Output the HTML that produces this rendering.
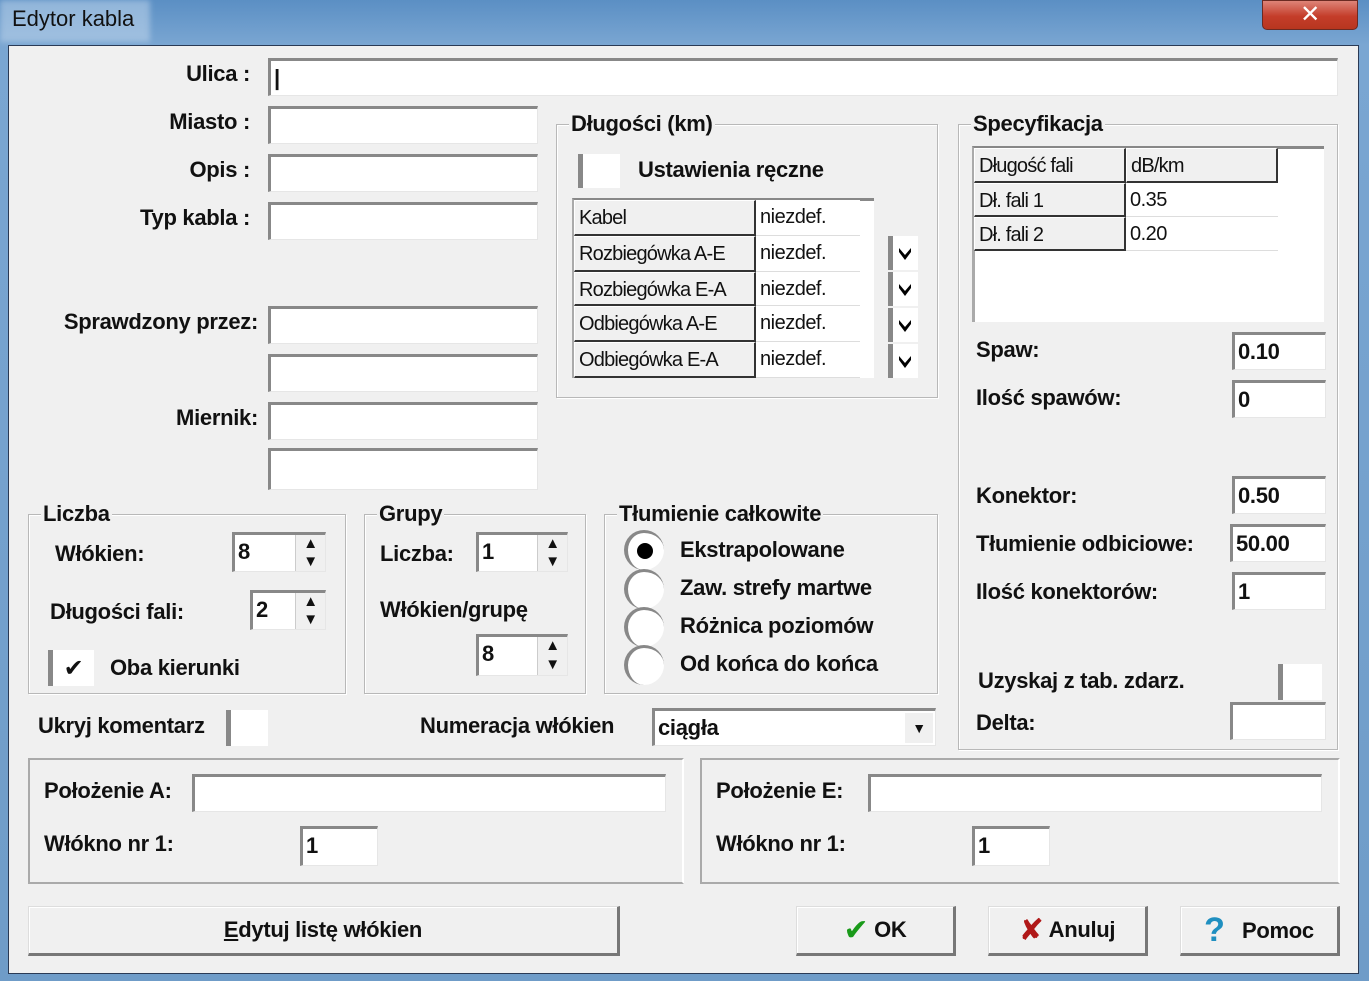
<!DOCTYPE html>
<html><head><meta charset="utf-8"><style>
*{box-sizing:border-box;margin:0;padding:0}
body{width:1369px;height:981px;overflow:hidden;background:linear-gradient(180deg,#5b8fc4 0,#7aa6d2 45px,#6f9cc8 100%);position:relative;font-family:"Liberation Sans Narrow","Liberation Sans",sans-serif;font-weight:bold;font-size:22px;color:#111;letter-spacing:-0.3px}
.a{position:absolute;white-space:nowrap}
.dlg{position:absolute;left:8px;top:45px;width:1351px;height:929px;background:#f0f0f0;border:1px solid #2a3a55}
.in{position:absolute;background:#fff;border-top:3px solid #888;border-left:3px solid #888;border-right:1px solid #e6e6e6;border-bottom:1px solid #e6e6e6;padding-left:3px;font-size:22px;line-height:34px}
.grp{position:absolute;border:1px solid #b8b8b8;box-shadow:inset 1px 1px 0 #fff,1px 1px 0 #fff}
.gt{position:absolute;top:-14px;left:12px;background:#f0f0f0;padding:0 2px;line-height:26px}
.lbl{position:absolute;white-space:nowrap;line-height:28px}
.r{text-align:right}
.btn{position:absolute;background:#f0f0f0;border:1px solid #ddd;border-right:3px solid #777;border-bottom:3px solid #777;box-shadow:inset 1px 1px 0 #fff;text-align:center;line-height:46px}
.cb{position:absolute;background:#fff;border-left:5px solid #888}
.cell{position:absolute;font-weight:normal;font-size:20px;letter-spacing:-0.8px;line-height:34px;padding-left:4px;background:#f0f0f0;border-right:2px solid #333;border-bottom:2px solid #333;border-top:1px solid #fff;border-left:1px solid #fff;overflow:hidden}
.cw{position:absolute;font-weight:normal;font-size:20px;letter-spacing:-0.5px;line-height:34px;padding-left:4px;background:#fff;border-bottom:1px solid #ddd}
.spin{position:absolute;width:30px;background:#f0f0f0;border-left:1px solid #ccc}
.spin div{height:50%;font-size:15px;text-align:center;line-height:18px}
.rad{position:absolute;width:40px;height:40px;border-radius:50%;background:#fff;border-left:4px solid #888;border-top:3px solid #888}
.arr{position:absolute;width:30px;height:34px;background:#fff;border-left:5px solid #888}
</style></head><body>
<div class="a" style="left:0;top:0;width:150px;height:42px;background:rgba(200,220,240,.5);filter:blur(3px)"></div>
<div class="a" style="left:12px;top:6px;font-family:'Liberation Sans',sans-serif;font-weight:normal;font-size:22px;letter-spacing:0">Edytor kabla</div>
<div class="a" style="left:1262px;top:0;width:96px;height:30px;border-radius:0 0 5px 5px;background:linear-gradient(#de8478,#c43d2a 55%,#b8361f);border:1px solid #6b2a22;color:#fff;text-align:center;font-size:24px;line-height:26px;font-family:'DejaVu Sans',sans-serif">✕</div>
<div class="dlg"></div>

<div class="lbl r" style="left:100px;top:60px;width:150px">Ulica :</div>
<div class="in" style="left:268px;top:58px;width:1070px;height:38px">|</div>
<div class="lbl r" style="left:100px;top:108px;width:150px">Miasto :</div>
<div class="in" style="left:268px;top:106px;width:270px;height:38px"></div>
<div class="lbl r" style="left:100px;top:156px;width:150px">Opis :</div>
<div class="in" style="left:268px;top:154px;width:270px;height:38px"></div>
<div class="lbl r" style="left:100px;top:204px;width:150px">Typ kabla :</div>
<div class="in" style="left:268px;top:202px;width:270px;height:38px"></div>
<div class="lbl r" style="left:20px;top:308px;width:238px">Sprawdzony przez:</div>
<div class="in" style="left:268px;top:306px;width:270px;height:38px"></div>
<div class="in" style="left:268px;top:354px;width:270px;height:38px"></div>
<div class="lbl r" style="left:20px;top:404px;width:238px">Miernik:</div>
<div class="in" style="left:268px;top:402px;width:270px;height:38px"></div>
<div class="in" style="left:268px;top:448px;width:270px;height:42px"></div>

<!-- Dlugosci -->
<div class="grp" style="left:556px;top:124px;width:382px;height:274px"><div class="gt">Długości (km)</div></div>
<div class="cb" style="left:578px;top:154px;width:42px;height:34px"></div>
<div class="lbl" style="left:638px;top:156px">Ustawienia ręczne</div>
<div class="a" style="left:572px;top:198px;width:302px;height:180px;background:#fff;border-top:3px solid #888;border-left:3px solid #aaa"></div>
<div class="cell" style="left:574px;top:200px;width:182px;height:36px">Kabel</div><div class="cw" style="left:756px;top:200px;width:104px;height:36px">niezdef.</div>
<div class="cell" style="left:574px;top:236px;width:182px;height:36px">Rozbiegówka A-E</div><div class="cw" style="left:756px;top:236px;width:104px;height:36px">niezdef.</div>
<div class="cell" style="left:574px;top:272px;width:182px;height:34px">Rozbiegówka E-A</div><div class="cw" style="left:756px;top:272px;width:104px;height:34px">niezdef.</div>
<div class="cell" style="left:574px;top:306px;width:182px;height:36px">Odbiegówka A-E</div><div class="cw" style="left:756px;top:306px;width:104px;height:36px">niezdef.</div>
<div class="cell" style="left:574px;top:342px;width:182px;height:36px">Odbiegówka E-A</div><div class="cw" style="left:756px;top:342px;width:104px;height:36px">niezdef.</div>
<div class="arr" style="left:888px;top:236px"><svg width="25" height="34"><path d="M6 12 L12 19 L18 12 L18 16 L12 24 L6 16Z" fill="#000"/></svg></div>
<div class="arr" style="left:888px;top:272px"><svg width="25" height="34"><path d="M6 12 L12 19 L18 12 L18 16 L12 24 L6 16Z" fill="#000"/></svg></div>
<div class="arr" style="left:888px;top:308px"><svg width="25" height="34"><path d="M6 12 L12 19 L18 12 L18 16 L12 24 L6 16Z" fill="#000"/></svg></div>
<div class="arr" style="left:888px;top:344px"><svg width="25" height="34"><path d="M6 12 L12 19 L18 12 L18 16 L12 24 L6 16Z" fill="#000"/></svg></div>

<!-- Specyfikacja -->
<div class="grp" style="left:958px;top:124px;width:380px;height:626px"><div class="gt">Specyfikacja</div></div>
<div class="a" style="left:972px;top:146px;width:352px;height:176px;background:#fff;border-top:3px solid #888;border-left:3px solid #aaa"></div>
<div class="cell" style="left:974px;top:148px;width:152px;height:35px">Długość fali</div><div class="cell" style="left:1126px;top:148px;width:152px;height:35px">dB/km</div>
<div class="cell" style="left:974px;top:183px;width:152px;height:34px">Dł. fali 1</div><div class="cw" style="left:1126px;top:183px;width:152px;height:34px">0.35</div>
<div class="cell" style="left:974px;top:217px;width:152px;height:34px">Dł. fali 2</div><div class="cw" style="left:1126px;top:217px;width:152px;height:34px">0.20</div>
<div class="lbl" style="left:976px;top:336px">Spaw:</div>
<div class="in" style="left:1232px;top:332px;width:94px;height:38px">0.10</div>
<div class="lbl" style="left:976px;top:384px">Ilość spawów:</div>
<div class="in" style="left:1232px;top:380px;width:94px;height:38px">0</div>
<div class="lbl" style="left:976px;top:482px">Konektor:</div>
<div class="in" style="left:1232px;top:476px;width:94px;height:38px">0.50</div>
<div class="lbl" style="left:976px;top:530px">Tłumienie odbiciowe:</div>
<div class="in" style="left:1230px;top:524px;width:96px;height:38px">50.00</div>
<div class="lbl" style="left:976px;top:578px">Ilość konektorów:</div>
<div class="in" style="left:1232px;top:572px;width:94px;height:38px">1</div>
<div class="lbl" style="left:978px;top:667px">Uzyskaj z tab. zdarz.</div>
<div class="cb" style="left:1278px;top:664px;width:44px;height:36px"></div>
<div class="lbl" style="left:976px;top:709px">Delta:</div>
<div class="in" style="left:1230px;top:702px;width:96px;height:38px"></div>

<!-- Liczba -->
<div class="grp" style="left:28px;top:514px;width:318px;height:180px"><div class="gt">Liczba</div></div>
<div class="lbl" style="left:55px;top:540px">Włókien:</div>
<div class="in" style="left:232px;top:532px;width:94px;height:40px">8<div class="spin" style="right:0;top:0;height:36px"><div>▲</div><div>▼</div></div></div>
<div class="lbl" style="left:50px;top:598px">Długości fali:</div>
<div class="in" style="left:250px;top:590px;width:76px;height:40px">2<div class="spin" style="right:0;top:0;height:36px"><div>▲</div><div>▼</div></div></div>
<div class="cb" style="left:48px;top:650px;width:46px;height:36px;text-align:center;font-size:24px;line-height:36px;font-family:'DejaVu Sans',sans-serif">✔</div>
<div class="lbl" style="left:110px;top:654px">Oba kierunki</div>

<!-- Grupy -->
<div class="grp" style="left:364px;top:514px;width:222px;height:180px"><div class="gt">Grupy</div></div>
<div class="lbl" style="left:380px;top:540px">Liczba:</div>
<div class="in" style="left:476px;top:532px;width:92px;height:40px">1<div class="spin" style="right:0;top:0;height:36px"><div>▲</div><div>▼</div></div></div>
<div class="lbl" style="left:380px;top:596px">Włókien/grupę</div>
<div class="in" style="left:476px;top:634px;width:92px;height:42px">8<div class="spin" style="right:0;top:0;height:38px"><div>▲</div><div>▼</div></div></div>

<!-- Tlumienie -->
<div class="grp" style="left:604px;top:514px;width:334px;height:180px"><div class="gt">Tłumienie całkowite</div></div>
<div class="rad" style="left:624px;top:530px"><div style="position:absolute;left:9px;top:10px;width:16px;height:16px;border-radius:50%;background:#000"></div></div>
<div class="lbl" style="left:680px;top:536px">Ekstrapolowane</div>
<div class="rad" style="left:624px;top:569px"></div>
<div class="lbl" style="left:680px;top:574px">Zaw. strefy martwe</div>
<div class="rad" style="left:624px;top:607px"></div>
<div class="lbl" style="left:680px;top:612px">Różnica poziomów</div>
<div class="rad" style="left:624px;top:645px"></div>
<div class="lbl" style="left:680px;top:650px">Od końca do końca</div>

<div class="lbl" style="left:38px;top:712px">Ukryj komentarz</div>
<div class="cb" style="left:226px;top:710px;width:42px;height:36px"></div>
<div class="lbl" style="left:420px;top:712px">Numeracja włókien</div>
<div class="in" style="left:652px;top:708px;width:284px;height:38px">ciągła<div style="position:absolute;right:2px;top:2px;width:28px;height:30px;background:#f0f0f0;font-size:14px;text-align:center;line-height:30px">▼</div></div>

<!-- Polozenie -->
<div class="a" style="left:28px;top:758px;width:656px;height:126px;border-top:2px solid #aaa;border-left:2px solid #aaa;border-right:2px solid #fff;border-bottom:2px solid #aaa"></div>
<div class="lbl" style="left:44px;top:777px">Położenie A:</div>
<div class="in" style="left:192px;top:774px;width:474px;height:38px"></div>
<div class="lbl" style="left:44px;top:830px">Włókno nr 1:</div>
<div class="in" style="left:300px;top:826px;width:78px;height:40px">1</div>
<div class="a" style="left:700px;top:758px;width:640px;height:126px;border-top:2px solid #aaa;border-left:2px solid #aaa;border-right:2px solid #fff;border-bottom:2px solid #aaa"></div>
<div class="lbl" style="left:716px;top:777px">Położenie E:</div>
<div class="in" style="left:868px;top:774px;width:454px;height:38px"></div>
<div class="lbl" style="left:716px;top:830px">Włókno nr 1:</div>
<div class="in" style="left:972px;top:826px;width:78px;height:40px">1</div>

<div class="btn" style="left:28px;top:906px;width:592px;height:50px"><u>E</u>dytuj listę włókien</div>
<div class="btn" style="left:796px;top:906px;width:160px;height:50px"><span style="color:#1a9a1a;font-family:'DejaVu Sans';font-size:30px;vertical-align:-3px">✔</span> OK</div>
<div class="btn" style="left:988px;top:906px;width:160px;height:50px"><span style="color:#b01818;font-family:'DejaVu Sans';font-size:30px;vertical-align:-3px">✘</span> Anuluj</div>
<div class="btn" style="left:1180px;top:906px;width:160px;height:50px"><span style="color:#1f8fc0;font-size:34px;vertical-align:-3px">?</span>&nbsp;&nbsp; Pomoc</div>
</body></html>
